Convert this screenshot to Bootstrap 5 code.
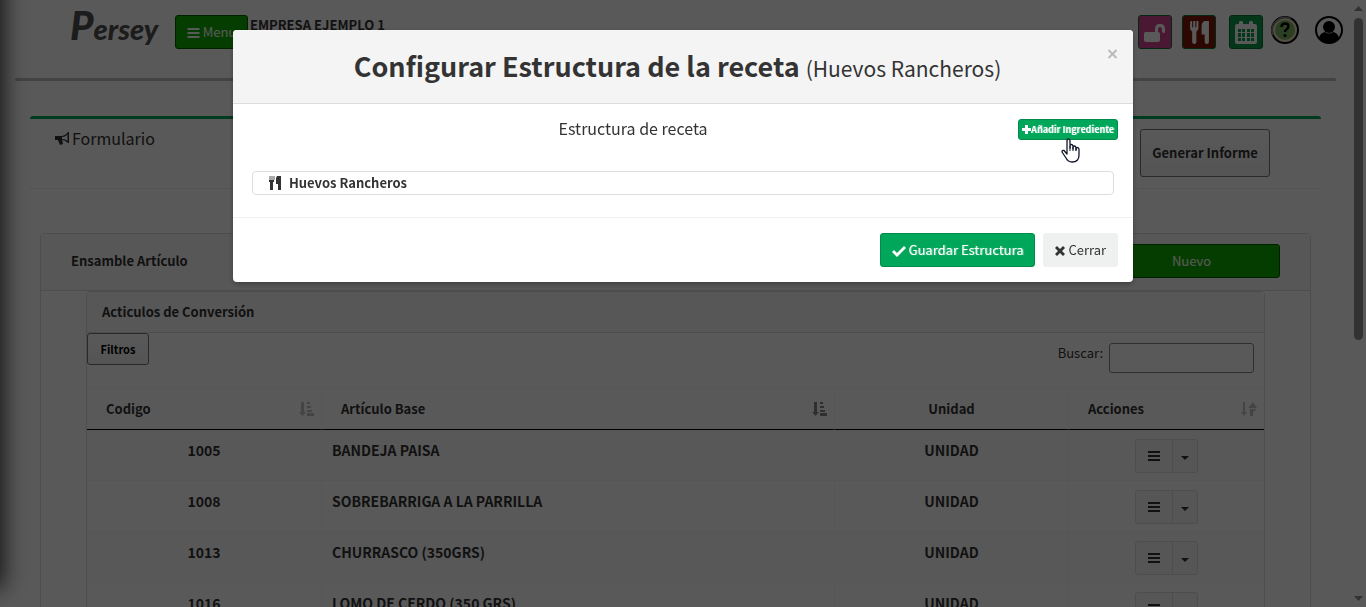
<!DOCTYPE html>
<html lang="es">
<head>
<meta charset="utf-8">
<meta name="viewport" content="width=device-width, initial-scale=1">
<title>Persey</title>
<link rel="stylesheet" href="https://cdn.jsdelivr.net/npm/bootstrap@5.3.0/dist/css/bootstrap.min.css">
<style>
body{font-family:"Noto Sans CJK SC","Noto Sans",sans-serif;font-size:13px;line-height:20px;color:#333;background:#fff;overflow:hidden;padding-right:15px}
.page{height:100vh;overflow:hidden}
svg{fill:currentColor;flex:none}
.offside{position:fixed;left:-230px;top:-20px;bottom:22px;width:230px;background:#fff;box-shadow:0 0 22px 3px rgba(0,0,0,.8)}
.topbar{height:78px;padding:0 8px 0 70px}
.brand{width:105px;font-family:Lato,sans-serif;font-style:italic;font-weight:900;font-size:29px;line-height:50px;color:#505050;text-decoration:none}
.brand-cap{font-size:40px}
.topbar-row{padding-top:15px}
.rule{height:3px;background:#c0c0c0;margin:0 15px;border-radius:2px}
.btn{--bs-btn-font-size:13px;--bs-btn-line-height:20px;--bs-btn-padding-x:12px;--bs-btn-padding-y:6px;--bs-btn-border-radius:3px}
.btn-menu{--bs-btn-color:#fff;--bs-btn-bg:#10b000;--bs-btn-border-color:#006000;--bs-btn-hover-color:#fff;--bs-btn-hover-bg:#0e9c00}
.menu-w{width:73px}
.company{margin-left:2px}
.btn-go{--bs-btn-color:#fff;--bs-btn-bg:#00a65a;--bs-btn-border-color:#008d4c;--bs-btn-hover-color:#fff;--bs-btn-hover-bg:#008d4c;text-shadow:1px 0 1px rgba(255,255,255,.5)}
.btn-tile{width:34px;height:34px;padding:0;color:#fff;border-color:#087038}
.tile-pink{background:#d5478f}
.tile-red{background:#82190a;margin-left:10px}
.tile-green{background:#0c9a4c;margin-left:13px}
.btn-round{border:0;background:none;padding:1px 0 0;width:28px;color:#000}
.btn-line{--bs-btn-color:#333;--bs-btn-border-color:#777;font-weight:700;background:linear-gradient(#fff,#f1f1f1)}
.btn-report{width:130px;height:48px}
.btn-filter{--bs-btn-font-size:11px;--bs-btn-color:#000;width:62px;height:32px}
.btn-grey{--bs-btn-color:#333;--bs-btn-bg:#eff0f0;--bs-btn-border-color:#eff0f0;--bs-btn-hover-bg:#ddd}
.panel-main{margin:35px 30px 0;border-top:3px solid #00a65a;border-radius:3px}
.panel-head{height:70px;padding:10px 51px 0 25px;border-bottom:1px solid #eee}
.title-m{font-size:16px;line-height:18px;font-weight:400;margin:0}
.title-m svg{margin-right:3px}
.outer{margin:44px 10px 0;border:1px solid #ddd;border-radius:4px}
.outer-head{height:57px;padding:0 30px 2px;border-bottom:1px solid #ddd;background:#fafafa}
.btn-new{width:177px}
.inner{margin:0 45px;border:1px solid #ddd;border-radius:4px}
.inner-head{height:41px;padding:0 15px;border-bottom:1px solid #ddd;background:#fafafa}
.tools{height:55px;padding-right:10px}
.finder{padding-top:10px;gap:6px}
.search{width:145px;height:30px;border:1px solid #888;border-radius:3px;background:#fff}
.grid-t{table-layout:fixed;width:100%;border-collapse:separate;border-spacing:0}
.grid-t th{height:42px;padding:0 7px 0 19px;border-top:1px solid #f6f6f6;border-bottom:1px solid #000;border-right:1px solid #f6f6f6}
.grid-t th.text-center{padding:0}
.grid-t td{height:51px;padding:10px 10px 0;vertical-align:top;font-size:14px;font-weight:700;border-right:1px solid #f6f6f6;border-bottom:1px solid #f6f6f6}
.grid-t tbody tr:nth-child(odd) td{background:#fbfbfb}
.grid-t th:last-child,.grid-t td:last-child{border-right:0}
.grid-t td.act{padding-top:9px}
.btn-opt{--bs-btn-bg:#f6f6f6;--bs-btn-border-color:#ddd;--bs-btn-color:#333;height:34px;line-height:0}
.btn-drop{width:26px;padding:4px 0 0}
.sort-off{color:#c4c4c4}
.sort-on{color:#888}
.col-code{width:235px}
.col-unit{width:234px}
.col-act{width:195px}
.vscroll{position:fixed;top:0;right:0;bottom:0;width:15px;color:#909090;padding:6px 0}
.vthumb{width:9px;height:322px;border-radius:5px;background:#909090;margin-top:7px}
.modal-backdrop{--bs-backdrop-opacity:.65}
.modal{--bs-modal-width:900px}
.modal-dialog{margin-top:30px}
.modal-content{border:0;border-radius:4px;box-shadow:0 2px 5px rgba(0,0,0,.3);color:#333}
.modal-header{height:74px;padding:0 15px;background:#f4f4f4;border-bottom:1px solid #ddd;border-radius:4px 4px 0 0}
.title-l{font-size:27px;line-height:36px;font-weight:700}
.title-l small{font-size:21px;font-weight:400}
.x-close{border:0;background:none;padding:19px 0 0;color:#bbb;line-height:0}
.modal-body{padding:15px 15px 22px}
.btn-mini{--bs-btn-font-size:9px;--bs-btn-line-height:13px;--bs-btn-padding-x:3px;--bs-btn-padding-y:3px;font-weight:700}
.tree{margin:31px 4px 0;height:24px;border:1px solid #ddd;border-radius:4px;padding-left:16px;gap:8px}
.modal-footer{border-top:1px solid #f1f1f1;padding:15px;gap:8px}
.modal-footer>*{margin:0}
.modal-footer .btn{--bs-btn-padding-x:11px}
.pointer{position:absolute;right:52px;top:108px}
</style>
</head>
<body>
<svg width="0" height="0" class="position-absolute" aria-hidden="true">
 <defs>
  <path id="bars" d="M0 0h12v2H0zM0 4h12v2H0zM0 8h12v2H0z"/>
  <path id="food" d="M1 0h1v6h1V0h2v6h1V0h2v7q0 2-2 3v10q0 2-2 2t-2-2V10Q0 9 0 7V1zM14 0h4v20q0 2-2 2t-2-2v-7h-3V5q0-4 3-5z"/>
  <path id="sort" d="M2 0h3v10h2l-3.500 4L0 10h2zM8 0h3v2H8zM8 4h4v2H8zM8 8h5v2H8zM8 11h7v3H8z"/>
  <path id="sortboth" d="M2 0h2v10h2l-3 4-3-4h2zM7 6l5-6 4 6zM8 7h8l-4 3v4H9V7z"/>
  <path id="times" d="M2 0l3 3 3-3 2 2-3 3 3 3-2 2-3-3-3 3-2-2 3-3-3-3z"/>
 </defs>
</svg>
<div class="page">
 <aside class="offside"></aside>
 <header class="topbar d-flex align-items-start">
  <a href="#" class="brand"><span class="brand-cap">P</span>ersey</a>
  <div class="topbar-row d-flex align-items-start flex-fill">
   <button type="button" class="btn btn-menu menu-w px-0"><svg width="13" height="10" viewBox="0 0 12 10"><use href="#bars"/></svg> Menu</button>
   <strong class="company">EMPRESA EJEMPLO 1</strong>
   <button type="button" class="btn btn-tile tile-pink ms-auto" aria-label="Desbloquear"><svg width="22" height="20" viewBox="0 0 22 20"><path d="M1 9h10V6q0-5 5-5t5 5v3q0 1-1 1t-2-1V7q0-3-2-3t-2 3v2q2 0 2 2v6q0 2-2 2H2q-2 0-2-2v-6q0-1 1-2z"/></svg></button>
   <button type="button" class="btn btn-tile tile-red" aria-label="Recetas"><svg width="19" height="23" viewBox="0 0 18 22"><use href="#food"/></svg></button>
   <button type="button" class="btn btn-tile tile-green" aria-label="Calendario"><svg width="22" height="23" viewBox="0 0 22 23"><path fill-rule="evenodd" d="M4 3V1q0-1 2-1t2 1v2h6V1q0-1 2-1t2 1v2h2q2 0 2 2v16q0 2-2 2H2q-2 0-2-2V5q0-2 2-2zM3 8v3h3V8zm4 0v3h3V8zm5 0v3h3V8zm4 0v3h3V8zM3 12v4h3v-4zm4 0v4h3v-4zm5 0v4h3v-4zm4 0v4h3v-4zM3 17v3h3v-3zm4 0v3h3v-3zm5 0v3h3v-3zm4 0v3h3v-3z"/></svg></button>
   <button type="button" class="btn-round ms-2" aria-label="Ayuda"><svg class="d-block" width="28" height="28" viewBox="0 0 28 28"><circle cx="14" cy="14" r="13" fill="#f1dfc4" stroke="#000" stroke-width="2"/><path d="M2 19A13 13 0 0 1 20 3" stroke="#888" stroke-width="2" fill="none"/><circle cx="14" cy="14" r="10" fill="#7bb661"/><path d="M10.500 11q0-3.500 3.500-3.500t3.500 3q0 1.500-1.800 2.700T14 16" stroke="#000" stroke-width="2.400" fill="none"/><circle cx="14" cy="19.500" r="1.600"/></svg></button>
   <button type="button" class="btn-round ms-3" aria-label="Usuario"><svg class="d-block" width="28" height="28" viewBox="0 0 28 28"><circle cx="14" cy="14" r="13" fill="#fff" stroke="#000" stroke-width="2"/><circle cx="14" cy="11" r="6"/><path d="M4 22q1-5 6-6 4 3 8 0 5 1 6 6-4 5-10 5T4 22z"/></svg></button>
  </div>
 </header>
 <div class="rule"></div>
 <section class="panel-main">
  <div class="panel-head d-flex align-items-start justify-content-between">
   <h2 class="title-m d-flex align-items-center"><svg width="14" height="13" viewBox="0 0 14 13"><path fill-rule="evenodd" d="M0 4h6q4 0 7-4h1v11h-1q-3-3-6-3l1 4-3 1-2-5H0zM7 5v2q4 0 5.500 2V2Q11 5 7 5z"/></svg>Formulario</h2>
   <button type="button" class="btn btn-line btn-report px-0">Generar Informe</button>
  </div>
  <div class="outer">
   <div class="outer-head d-flex align-items-center justify-content-between"><strong>Ensamble Artículo</strong><button type="button" class="btn btn-menu btn-new">Nuevo</button></div>
   <div class="inner">
    <div class="inner-head d-flex align-items-center"><strong>Acticulos de Conversión</strong></div>
    <div class="tools d-flex align-items-start justify-content-between">
     <button type="button" class="btn btn-line btn-filter p-0">Filtros</button>
     <div class="finder d-flex align-items-start"><label for="buscar">Buscar:</label><input id="buscar" type="search" class="search"></div>
    </div>
    <table class="grid-t">
     <thead><tr>
      <th class="col-code"><div class="d-flex align-items-center justify-content-between">Codigo<svg class="sort-off" width="15" height="14"><use href="#sort"/></svg></div></th>
      <th><div class="d-flex align-items-center justify-content-between">Artículo Base<svg class="sort-on" width="15" height="14"><use href="#sort"/></svg></div></th>
      <th class="col-unit text-center">Unidad</th>
      <th class="col-act"><div class="d-flex align-items-center justify-content-between">Acciones<svg class="sort-off" width="16" height="14"><use href="#sortboth"/></svg></div></th>
     </tr></thead>
     <tbody>
      <tr><td class="text-center">1005</td><td>BANDEJA PAISA</td><td class="text-center">UNIDAD</td><td class="act text-center"><div class="btn-group"><button type="button" class="btn btn-opt" aria-label="Opciones"><svg width="12" height="10"><use href="#bars"/></svg></button><button type="button" class="btn btn-opt btn-drop" aria-label="Más"><svg width="8" height="4"><path d="M0 0h8L4 4z"/></svg></button></div></td></tr>
      <tr><td class="text-center">1008</td><td>SOBREBARRIGA A LA PARRILLA</td><td class="text-center">UNIDAD</td><td class="act text-center"><div class="btn-group"><button type="button" class="btn btn-opt" aria-label="Opciones"><svg width="12" height="10"><use href="#bars"/></svg></button><button type="button" class="btn btn-opt btn-drop" aria-label="Más"><svg width="8" height="4"><path d="M0 0h8L4 4z"/></svg></button></div></td></tr>
      <tr><td class="text-center">1013</td><td>CHURRASCO (350GRS)</td><td class="text-center">UNIDAD</td><td class="act text-center"><div class="btn-group"><button type="button" class="btn btn-opt" aria-label="Opciones"><svg width="12" height="10"><use href="#bars"/></svg></button><button type="button" class="btn btn-opt btn-drop" aria-label="Más"><svg width="8" height="4"><path d="M0 0h8L4 4z"/></svg></button></div></td></tr>
      <tr><td class="text-center">1016</td><td>LOMO DE CERDO (350 GRS)</td><td class="text-center">UNIDAD</td><td class="act text-center"><div class="btn-group"><button type="button" class="btn btn-opt" aria-label="Opciones"><svg width="12" height="10"><use href="#bars"/></svg></button><button type="button" class="btn btn-opt btn-drop" aria-label="Más"><svg width="8" height="4"><path d="M0 0h8L4 4z"/></svg></button></div></td></tr>
     </tbody>
    </table>
   </div>
  </div>
 </section>
 <div class="vscroll d-flex flex-column align-items-center"><svg width="9" height="5"><path d="M0 5L4.500 0 9 5z"/></svg><div class="vthumb"></div><svg class="mt-auto" width="9" height="5"><path d="M0 0h9L4.500 5z"/></svg></div>
</div>
<div class="modal-backdrop show"></div>
<div class="modal show d-block" role="dialog" aria-labelledby="titulo"><div class="modal-dialog"><div class="modal-content">
 <div class="modal-header">
  <h1 class="title-l flex-fill text-center m-0" id="titulo">Configurar Estructura de la receta <small>(Huevos Rancheros)</small></h1>
  <button type="button" class="x-close align-self-start" aria-label="Cerrar"><svg width="11" height="10" viewBox="0 0 10 10"><path d="M1 1l8 8M9 1L1 9" stroke="currentColor" stroke-width="2"/></svg></button>
 </div>
 <div class="modal-body">
  <div class="d-flex align-items-start"><h2 class="title-m flex-fill text-center">Estructura de receta</h2>
   <button type="button" class="btn btn-go btn-mini d-flex align-items-center"><svg width="9" height="9"><path d="M3 0h3v3h3v3H6v3H3V6H0V3h3z"/></svg>Añadir Ingrediente</button></div>
  <div class="tree d-flex align-items-center"><svg width="12" height="14"><path fill="#aaa" d="M0 0h6v4H0z"/><path d="M0 4h5v2H4v8H1V6H0zM8 0h4v14H9V8H7V2z"/></svg><strong>Huevos Rancheros</strong></div>
 </div>
 <div class="modal-footer">
  <button type="button" class="btn btn-go"><svg width="14" height="11" viewBox="0 0 14 11"><path d="M0 6l2-2 3 3 7-7 2 2-9 9z"/></svg> Guardar Estructura</button>
  <button type="button" class="btn btn-grey"><svg width="10" height="10"><use href="#times"/></svg> Cerrar</button>
 </div>
 <svg class="pointer" width="20" height="26" viewBox="0 0 20 26"><path fill="#fff" stroke="#111827" stroke-width="1.300" stroke-linejoin="round" d="M6 16V3q0-2 1.500-2T9 3v7-2.500q0-1 1.300-1T12 8v3-2q0-1 1.300-1T15 9.500V12v-1.500q0-1 1.200-1T18 11v6q0 7-7 7-4 0-6-4l-4-6q0-2 2-1.500z"/><path d="M9 8v5M12 9v4M15 10v3" stroke="#111827"/></svg>
</div></div></div>
<script src="https://cdn.jsdelivr.net/npm/bootstrap@5.3.0/dist/js/bootstrap.bundle.min.js"></script>
</body>
</html>
